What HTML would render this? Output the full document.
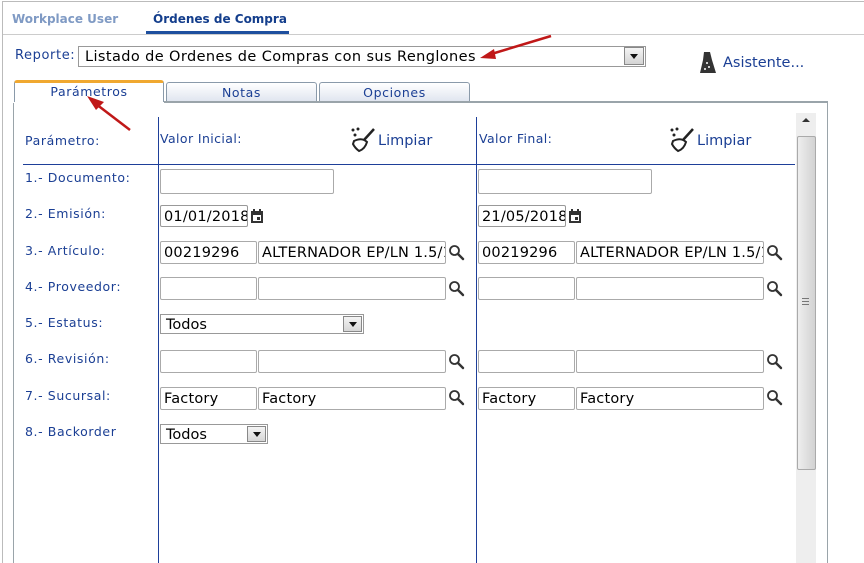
<!DOCTYPE html><html><head><meta charset="utf-8"><style>
*{margin:0;padding:0;box-sizing:border-box}
html,body{width:864px;height:563px;overflow:hidden}
body{background:#fff;font-family:"DejaVu Sans","Liberation Sans",sans-serif;position:relative}
.a{position:absolute}
.lbl{position:absolute;left:25px;font-size:12.5px;color:#1b3f94;letter-spacing:.6px}
.in{position:absolute;height:23px;border:1px solid #aaa;border-radius:2px;background:#fff;font-size:14.5px;color:#000;padding:3px 0 0 3px;line-height:17px;white-space:nowrap;overflow:hidden;letter-spacing:.2px}
.dt{border-color:#999;height:22px}
.sel{position:absolute;height:20px;border:1px solid #999;background:#fff;font-size:14.5px;padding:1px 0 0 5px;line-height:18px}
.sel b{position:absolute;right:1px;top:1px;width:19px;height:16px;border:1px solid #888;background:linear-gradient(#f4f4f4,#d6d6d6)}
.sel b:after{content:"";position:absolute;left:5px;top:5px;border-left:4px solid transparent;border-right:4px solid transparent;border-top:5px solid #111}
.mag{position:absolute;width:18px;height:18px}
.tab{position:absolute;top:82px;height:21px;border:1px solid #8a9aaa;border-bottom:none;background:linear-gradient(#fff,#dde3ee);font-size:12.5px;color:#1b3f94;text-align:center;line-height:20px;letter-spacing:.6px;border-radius:3px 3px 0 0}
.hd{position:absolute;font-size:12.5px;color:#1b3f94;letter-spacing:.4px}
.lim{position:absolute;font-size:14.5px;color:#1b3f94}
</style></head><body>
<div class="a" style="left:2px;top:1px;width:862px;height:562px;border:1px solid #bbb;border-bottom:none;border-right:none"></div>
<div class="a" style="left:3px;top:34px;width:861px;height:1px;background:#ccc"></div>
<div class="a" style="left:12px;top:12px;font-size:12px;font-weight:bold;color:#7f9ac4">Workplace User</div>
<div class="a" style="left:153px;top:12px;font-size:12px;font-weight:bold;color:#143e8c">Órdenes de Compra</div>
<div class="a" style="left:146px;top:31px;width:143px;height:3px;background:#1e4f9e"></div>

<div class="a" style="left:15px;top:48px;font-size:13px;color:#1b3f94;letter-spacing:.6px">Reporte:</div>
<div class="a" style="left:78px;top:46px;width:568px;height:21px;border:1px solid #999;background:#fff;font-size:14.5px;padding:1px 0 0 6px;line-height:19px;letter-spacing:.4px">Listado de Ordenes de Compras con sus Renglones</div>
<div class="a" style="left:624px;top:47px;width:20px;height:18px;border:1px solid #888;background:linear-gradient(#f4f4f4,#d4d4d4)"><div class="a" style="left:5px;top:6px;border-left:4px solid transparent;border-right:4px solid transparent;border-top:5px solid #111"></div></div>
<svg class="a" style="left:478px;top:33px" width="80" height="30"><path d="M73 3 L10 22" stroke="#c01818" stroke-width="2.5"/><path d="M2 25 L16 16 L18 26Z" fill="#c01818"/></svg>
<svg class="a" style="left:699px;top:51px" width="18" height="24"><path d="M5 1h6l2 8 4 13H1L4 9z" fill="#333"/><circle cx="8" cy="12" r="1" fill="#fff"/><circle cx="10" cy="16" r="1" fill="#fff"/><circle cx="6" cy="18" r="1" fill="#fff"/></svg>
<div class="a" style="left:723px;top:55px;font-size:14.5px;color:#1b3f94">Asistente...</div>

<div class="tab" style="left:14px;width:150px;height:22px;top:80px;background:#fff;border-top:3px solid #f0a830;line-height:18px">Parámetros</div>
<div class="tab" style="left:166px;width:151px">Notas</div>
<div class="tab" style="left:319px;width:151px">Opciones</div>
<svg class="a" style="left:84px;top:92px" width="50" height="42"><path d="M46 38 L12 12" stroke="#c01818" stroke-width="2.5"/><path d="M3 4 L20 10 L12 18Z" fill="#c01818"/></svg>
<div class="a" style="left:164px;top:101px;width:664px;height:2px;background:#9aa4aa"></div>
<div class="a" style="left:13px;top:103px;width:1px;height:460px;background:#9aa4aa"></div>
<div class="a" style="left:827px;top:101px;width:1px;height:462px;background:#9aa4aa"></div>

<div class="a" style="left:796px;top:113px;width:20px;height:450px;background:#eee"></div>
<div class="a" style="left:797px;top:136px;width:19px;height:334px;border:1px solid #aaa;background:linear-gradient(90deg,#eee,#d2d2d2);border-radius:2px"></div>
<div class="a" style="left:802px;top:118px;border-left:4px solid transparent;border-right:4px solid transparent;border-bottom:4px solid #333"></div>
<div class="a" style="left:802px;top:298px;width:7px;height:7px;border-top:1px solid #777;border-bottom:1px solid #777"><div style="margin-top:2px;height:1px;background:#777"></div></div>

<div class="a" style="left:158px;top:117px;width:1px;height:446px;background:#1e3f99"></div>
<div class="a" style="left:476px;top:117px;width:1px;height:446px;background:#1e3f99"></div>
<div class="a" style="left:23px;top:164px;width:772px;height:1px;background:#1e3f99"></div>

<div class="lbl" style="top:133px">Parámetro:</div>
<div class="hd" style="left:160px;top:131px">Valor Inicial:</div>
<div class="hd" style="left:479px;top:131px">Valor Final:</div>
<svg class="a" style="left:350px;top:127px" width="26" height="26"><circle cx="3" cy="3" r="1.5" fill="#222"/><circle cx="8" cy="2" r="1.5" fill="#222"/><circle cx="5" cy="8" r="1.5" fill="#222"/><path d="M24 2 L14 13" stroke="#222" stroke-width="2.5"/><path d="M4 14 Q12 10 17 15 Q15 22 9 24 Q5 21 3 17 Z" fill="none" stroke="#222" stroke-width="2"/></svg>
<div class="lim" style="left:378px;top:133px">Limpiar</div>
<svg class="a" style="left:669px;top:127px" width="26" height="26"><circle cx="3" cy="3" r="1.5" fill="#222"/><circle cx="8" cy="2" r="1.5" fill="#222"/><circle cx="5" cy="8" r="1.5" fill="#222"/><path d="M24 2 L14 13" stroke="#222" stroke-width="2.5"/><path d="M4 14 Q12 10 17 15 Q15 22 9 24 Q5 21 3 17 Z" fill="none" stroke="#222" stroke-width="2"/></svg>
<div class="lim" style="left:697px;top:133px">Limpiar</div>

<div class="lbl" style="top:170px">1.- Documento:</div>
<div class="lbl" style="top:206px">2.- Emisión:</div>
<div class="lbl" style="top:243px">3.- Artículo:</div>
<div class="lbl" style="top:279px">4.- Proveedor:</div>
<div class="lbl" style="top:315px">5.- Estatus:</div>
<div class="lbl" style="top:351px">6.- Revisión:</div>
<div class="lbl" style="top:388px">7.- Sucursal:</div>
<div class="lbl" style="top:424px">8.- Backorder</div>

<div class="in" style="left:160px;top:169px;width:174px;height:25px"></div>
<div class="in dt" style="left:160px;top:205px;width:88px">01/01/2018</div>
<svg class="a" style="left:250px;top:208px" width="14" height="16"><rect x="1" y="3" width="12" height="12" fill="#333"/><rect x="3" y="7" width="8" height="6" fill="#fff"/><rect x="7" y="9" width="3" height="3" fill="#333"/><rect x="3" y="1" width="2" height="3" fill="#333"/><rect x="9" y="1" width="2" height="3" fill="#333"/></svg>
<div class="in" style="left:160px;top:241px;width:97px">00219296</div>
<div class="in" style="left:258px;top:241px;width:188px">ALTERNADOR EP/LN 1.5/1</div>
<div class="in" style="left:160px;top:277px;width:97px"></div>
<div class="in" style="left:258px;top:277px;width:188px"></div>
<div class="sel" style="left:160px;top:314px;width:204px">Todos<b></b></div>
<div class="in" style="left:160px;top:350px;width:97px"></div>
<div class="in" style="left:258px;top:350px;width:188px"></div>
<div class="in" style="left:160px;top:387px;width:97px">Factory</div>
<div class="in" style="left:258px;top:387px;width:188px">Factory</div>
<div class="sel" style="left:160px;top:424px;width:108px">Todos<b></b></div>

<div class="in" style="left:478px;top:169px;width:174px;height:25px"></div>
<div class="in dt" style="left:478px;top:205px;width:88px">21/05/2018</div>
<svg class="a" style="left:568px;top:208px" width="14" height="16"><rect x="1" y="3" width="12" height="12" fill="#333"/><rect x="3" y="7" width="8" height="6" fill="#fff"/><rect x="7" y="9" width="3" height="3" fill="#333"/><rect x="3" y="1" width="2" height="3" fill="#333"/><rect x="9" y="1" width="2" height="3" fill="#333"/></svg>
<div class="in" style="left:478px;top:241px;width:97px">00219296</div>
<div class="in" style="left:576px;top:241px;width:188px">ALTERNADOR EP/LN 1.5/1</div>
<div class="in" style="left:478px;top:277px;width:97px"></div>
<div class="in" style="left:576px;top:277px;width:188px"></div>
<div class="in" style="left:478px;top:350px;width:97px"></div>
<div class="in" style="left:576px;top:350px;width:188px"></div>
<div class="in" style="left:478px;top:387px;width:97px">Factory</div>
<div class="in" style="left:576px;top:387px;width:188px">Factory</div>

<svg width="0" height="0" style="position:absolute"><defs><g id="m"><circle cx="6.5" cy="6.5" r="4.5" fill="none" stroke="#333" stroke-width="1.8"/><path d="M10 10 L15 15" stroke="#333" stroke-width="2.4" stroke-linecap="round"/></g></defs></svg>
<svg class="mag" style="left:448px;top:244px"><use href="#m"/></svg>
<svg class="mag" style="left:448px;top:280px"><use href="#m"/></svg>
<svg class="mag" style="left:448px;top:353px"><use href="#m"/></svg>
<svg class="mag" style="left:448px;top:389px"><use href="#m"/></svg>
<svg class="mag" style="left:766px;top:244px"><use href="#m"/></svg>
<svg class="mag" style="left:766px;top:280px"><use href="#m"/></svg>
<svg class="mag" style="left:766px;top:353px"><use href="#m"/></svg>
<svg class="mag" style="left:766px;top:389px"><use href="#m"/></svg>
</body></html>
